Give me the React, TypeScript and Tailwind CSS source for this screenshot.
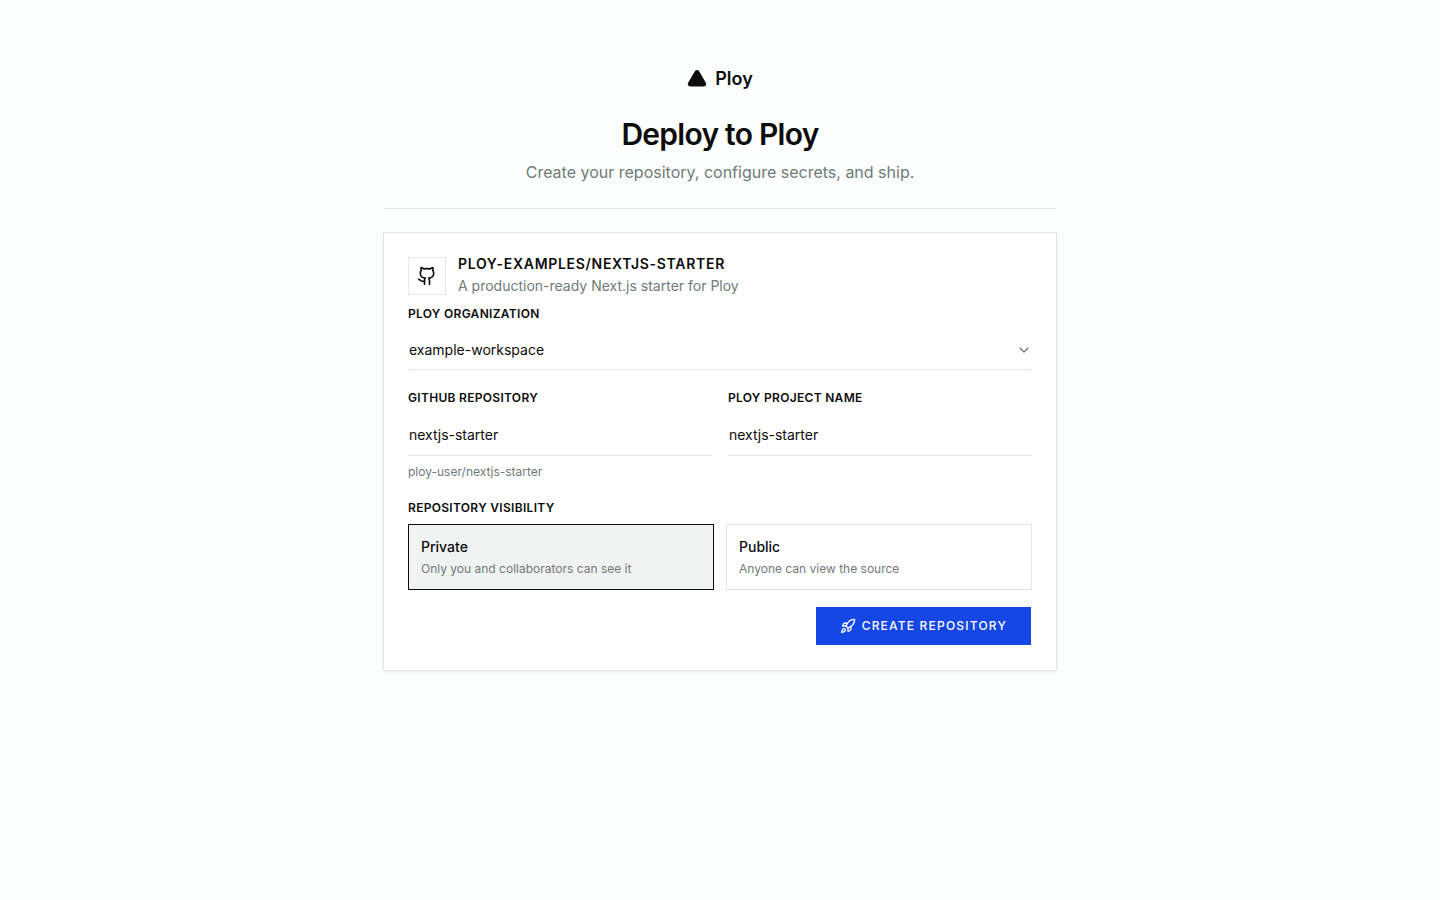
import { useState } from 'react'
import { ChevronDown, Github, Rocket } from 'lucide-react'

const visibilityOptions = [
  { value: 'private', title: 'Private', description: 'Only you and collaborators can see it' },
  { value: 'public', title: 'Public', description: 'Anyone can view the source' },
]

const labelClass = 'block text-xs font-semibold uppercase tracking-wide'
const inputClass =
  'w-full rounded-none border border-transparent border-b-[#e2e6e5] bg-transparent text-sm outline-none focus:border-b-[#1447e6]'

const Logo = () => (
  <div className="flex h-[30px] items-center justify-center gap-2">
    <svg width="20" height="20" viewBox="0 0 20 20" fill="currentColor" aria-hidden="true">
      <path d="M8 2C9 .6 11 .6 12 2L18.700 13.600C19.800 15.800 19 17.500 16.700 17.500H3.300C1 17.500 .2 15.800 1.300 13.600Z" />
    </svg>
    <span className="text-lg font-semibold">Ploy</span>
  </div>
)

const App = () => {
  const [org, setOrg] = useState('example-workspace')
  const [repo, setRepo] = useState('nextjs-starter')
  const [project, setProject] = useState('nextjs-starter')
  const [visibility, setVisibility] = useState('private')

  return (
    <main className="min-h-screen bg-[#fcfefd] px-6 py-16 font-['Inter',sans-serif] text-[#0b0d0d]">
      <div className="mx-auto flex max-w-2xl flex-col gap-6">
        <header className="border-b border-[#e2e6e5] pb-6 text-center">
          <Logo />
          <h1 className="mt-[22px] text-3xl font-semibold tracking-tight">Deploy to Ploy</h1>
          <p className="mt-2 text-base text-[#6f7a79]">
            Create your repository, configure secrets, and ship.
          </p>
        </header>

        <section className="bg-white p-6 shadow-sm ring-1 ring-[#e2e6e5]">
          <div className="flex items-start gap-3">
            <div className="border border-[#e2e6e5] p-2">
              <Github size={20} />
            </div>
            <div>
              <h2 className="text-sm leading-none font-semibold tracking-wider uppercase">
                ploy-examples/nextjs-starter
              </h2>
              <p className="mt-[5px] text-sm text-[#6f7a79]">
                A production-ready Next.js starter for Ploy
              </p>
            </div>
          </div>

          <form className="mt-2.5 flex flex-col gap-5" onSubmit={(e) => e.preventDefault()}>
            <div>
              <label htmlFor="org" className={labelClass}>
                Ploy organization
              </label>
              <div className="relative mt-2">
                <select
                  id="org"
                  value={org}
                  onChange={(e) => setOrg(e.target.value)}
                  className={`${inputClass} h-10 appearance-none`}
                >
                  <option value="example-workspace">example-workspace</option>
                </select>
                <ChevronDown
                  size={16}
                  className="pointer-events-none absolute top-3 right-0 text-[#6f7a79]"
                />
              </div>
            </div>

            <div className="grid grid-cols-2 gap-4">
              <div>
                <label htmlFor="repo" className={labelClass}>
                  GitHub repository
                </label>
                <input
                  id="repo"
                  value={repo}
                  onChange={(e) => setRepo(e.target.value)}
                  className={`${inputClass} mt-2 h-[42px] pb-0.5`}
                />
                <p className="mt-2 text-xs text-[#6f7a79]">ploy-user/{repo}</p>
              </div>
              <div>
                <label htmlFor="project" className={labelClass}>
                  Ploy project name
                </label>
                <input
                  id="project"
                  value={project}
                  onChange={(e) => setProject(e.target.value)}
                  className={`${inputClass} mt-2 h-[42px] pb-0.5`}
                />
              </div>
            </div>

            <fieldset>
              <legend className={labelClass}>Repository visibility</legend>
              <div className="mt-2 grid grid-cols-2 gap-3">
                {visibilityOptions.map((option) => (
                  <label
                    key={option.value}
                    className="relative block cursor-pointer border border-[#e2e6e5] p-3 has-checked:border-[#0b0d0d] has-checked:bg-[#f1f3f2]"
                  >
                    <input
                      type="radio"
                      name="visibility"
                      value={option.value}
                      checked={visibility === option.value}
                      onChange={() => setVisibility(option.value)}
                      className="sr-only"
                    />
                    <span className="block text-sm font-medium">{option.title}</span>
                    <span className="mt-1 block text-xs text-[#6f7a79]">{option.description}</span>
                  </label>
                ))}
              </div>
            </fieldset>

            <div className="-mt-1 flex justify-end">
              <button
                type="submit"
                className="flex h-10 cursor-pointer items-center gap-1.5 border border-transparent bg-[#1447e6] bg-clip-padding px-6 text-xs font-medium tracking-widest text-white uppercase"
              >
                <Rocket size={16} />
                Create repository
              </button>
            </div>
          </form>
        </section>
      </div>
    </main>
  )
}

export default App
